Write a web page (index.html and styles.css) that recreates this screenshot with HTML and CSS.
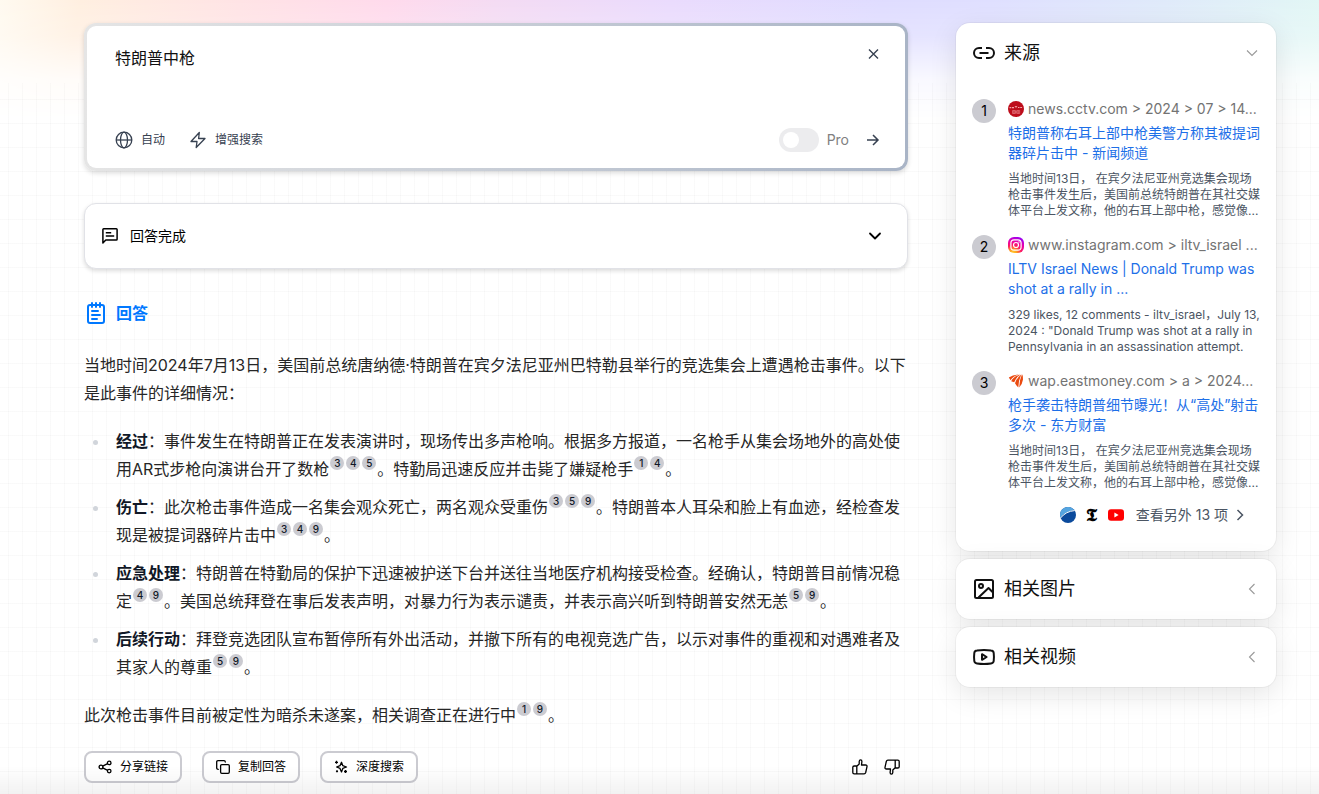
FILE: index.html
```html
<!DOCTYPE html>
<html lang="zh-CN">
<head>
<meta charset="utf-8">
<meta name="viewport" content="width=device-width, initial-scale=1">
<title>特朗普中枪</title>
<link rel="stylesheet" href="styles.css">
</head>
<body>
<div class="glow"></div>
<div class="page">
  <main class="main">
    <form class="search">
      <div class="search-inner">
        <div class="search-top">
          <textarea class="query" aria-label="搜索内容" rows="2">特朗普中枪</textarea>
          <button class="icon-btn" type="button" aria-label="清空">
            <svg width="16" height="16" viewBox="0 0 16 16" fill="none" stroke="currentColor" stroke-width="1.4"><path d="M4 3.500l9 9M13 3.500l-9 9"/></svg>
          </button>
        </div>
        <div class="search-bar">
          <button class="mode" type="button">
            <svg width="18" height="18" viewBox="0 0 18 18" fill="none" stroke="currentColor" stroke-width="1.3"><circle cx="9" cy="9" r="7.800"/><ellipse cx="9" cy="9" rx="3.500" ry="7.800"/><path d="M1.200 9h15.600"/></svg>
            <span>自动</span>
          </button>
          <button class="mode" type="button">
            <svg width="18" height="18" viewBox="0 0 18 18" fill="none" stroke="currentColor" stroke-width="1.300" stroke-linejoin="round"><path d="M10.300 1.500L2 10.500h6l-.8 6L16 7.500H9.600z"/></svg>
            <span>增强搜索</span>
          </button>
          <label class="pro"><input class="switch" type="checkbox"><span>Pro</span></label>
          <button class="icon-btn" type="submit" aria-label="搜索">
            <svg width="16" height="16" viewBox="0 0 16 16" fill="none" stroke="currentColor" stroke-width="1.500"><path d="M2 8h11M8 3l5 5-5 5"/></svg>
          </button>
        </div>
      </div>
    </form>

    <button class="status" type="button">
      <svg width="16" height="16" viewBox="0 0 16 16" fill="none" stroke="currentColor" stroke-width="1.500" stroke-linejoin="round"><path d="M.9 15V1.600q0-.8.8-.8h12.600q.8 0 .8.8v9.600q0 .8-.8.8H3.800z"/><path d="M3.800 4.800h5.400M3.800 8h8.400"/></svg>
      <span class="status-text">回答完成</span>
      <svg width="16" height="16" viewBox="0 0 16 16" fill="none" stroke="currentColor" stroke-width="1.800" stroke-linecap="round" stroke-linejoin="round"><path d="M3 5.500l5 5 5-5"/></svg>
    </button>

    <h2 class="answer-title">
      <svg width="24" height="24" viewBox="0 0 24 24" fill="none" stroke="currentColor" stroke-width="2" stroke-linecap="round"><rect x="4" y="4" width="16" height="18" rx="2"/><path d="M8 2v4M12 2v4M16 2v4M8 10h6M8 14h8M8 18h5"/></svg>
      <span>回答</span>
    </h2>

    <article class="answer">
      <p>当地时间2024年7月13日，美国前总统唐纳德·特朗普在宾夕法尼亚州巴特勒县举行的竞选集会上遭遇枪击事件。以下是此事件的详细情况：</p>
      <ul>
        <li><strong>经过</strong>：事件发生在特朗普正在发表演讲时，现场传出多声枪响。根据多方报道，一名枪手从集会场地外的高处使用AR式步枪向演讲台开了数枪<a class="cite" href="#s3">3</a><a class="cite" href="#s4">4</a><a class="cite" href="#s5">5</a>。特勤局迅速反应并击毙了嫌疑枪手<a class="cite" href="#s1">1</a><a class="cite" href="#s4">4</a>。</li>
        <li><strong>伤亡</strong>：此次枪击事件造成一名集会观众死亡，两名观众受重伤<a class="cite" href="#s3">3</a><a class="cite" href="#s5">5</a><a class="cite" href="#s9">9</a>。特朗普本人耳朵和脸上有血迹，经检查发现是被提词器碎片击中<a class="cite" href="#s3">3</a><a class="cite" href="#s4">4</a><a class="cite" href="#s9">9</a>。</li>
        <li><strong>应急处理</strong>：特朗普在特勤局的保护下迅速被护送下台并送往当地医疗机构接受检查。经确认，特朗普目前情况稳定<a class="cite" href="#s4">4</a><a class="cite" href="#s9">9</a>。美国总统拜登在事后发表声明，对暴力行为表示谴责，并表示高兴听到特朗普安然无恙<a class="cite" href="#s5">5</a><a class="cite" href="#s9">9</a>。</li>
        <li><strong>后续行动</strong>：拜登竞选团队宣布暂停所有外出活动，并撤下所有的电视竞选广告，以示对事件的重视和对遇难者及其家人的尊重<a class="cite" href="#s5">5</a><a class="cite" href="#s9">9</a>。</li>
      </ul>
      <p>此次枪击事件目前被定性为暗杀未遂案，相关调查正在进行中<a class="cite" href="#s1">1</a><a class="cite" href="#s9">9</a>。</p>
    </article>

    <div class="actions">
      <button class="action" type="button">
        <svg width="14" height="14" viewBox="0 0 14 14" fill="none" stroke="currentColor" stroke-width="1.300"><circle cx="3" cy="7" r="1.900"/><circle cx="11.200" cy="2.900" r="1.800"/><circle cx="11.200" cy="11.100" r="1.800"/><path d="M4.700 6.100l4.900-2.400M4.700 7.900l4.900 2.400"/></svg>
        <span>分享链接</span>
      </button>
      <button class="action" type="button">
        <svg width="14" height="14" viewBox="0 0 14 14" fill="none" stroke="currentColor" stroke-width="1.300" stroke-linecap="round"><rect x="4.600" y="4.600" width="8.700" height="8.700" rx="1.200"/><path d="M2.300 9.300q-1.600 0-1.600-1.300V2q0-1.300 1.300-1.300h6q1.300 0 1.300 1.300"/></svg>
        <span>复制回答</span>
      </button>
      <button class="action" type="button">
        <svg width="14" height="14" viewBox="0 0 14 14" fill="none" stroke="currentColor" stroke-width="1.300" stroke-linejoin="round"><path d="M7.500 2.300l1.300 3.400 3.700 1.300-3.700 1.400-1.300 3.500L6 8.400 2.600 7 6 5.700z"/><path d="M2.500.8v3M1 2.300h3M11.500 10v3M10 11.500h3"/><circle cx="3" cy="11.300" r=".5"/></svg>
        <span>深度搜索</span>
      </button>
      <div class="votes">
        <button class="icon-btn vote" type="button" aria-label="有帮助">
          <svg width="16" height="16" viewBox="0 0 16 16" fill="none" stroke="currentColor" stroke-width="1.300" stroke-linejoin="round"><path d="M4.800 14.800V7.200L7.200 5V2.500Q7.300.9 8.600.9q1.300 0 1.300 1.600L9.500 6h4q1.700 0 1.500 1.600l-1.300 5.900q-.4 1.300-1.600 1.300H2.200q-1.400 0-1.400-1.400V8.300q0-1.300 1.400-1.300h2.600"/></svg>
        </button>
        <button class="icon-btn vote" type="button" aria-label="没有帮助">
          <svg width="16" height="16" viewBox="0 0 16 16" fill="none" stroke="currentColor" stroke-width="1.300" stroke-linejoin="round"><path d="M11.200 1.200v7.600L8.800 11v2.500q-.1 1.600-1.400 1.600-1.300 0-1.300-1.600L6.500 10h-4Q.8 10 1 8.400l1.300-5.900q.4-1.300 1.600-1.300h9.900q1.400 0 1.400 1.400v5.100q0 1.300-1.400 1.300h-2.600"/></svg>
        </button>
      </div>
    </div>
  </main>

  <aside class="side">
    <section class="card sources">
      <button class="card-head" type="button">
        <svg width="24" height="24" viewBox="0 0 24 24" fill="none" stroke="currentColor" stroke-width="2"><path d="M10 17H7A5 5 0 0 1 7 7h3M14 7h3a5 5 0 0 1 0 10h-3M7.500 12h9"/></svg>
        <span class="card-title">来源</span>
        <svg class="caret" width="12" height="12" viewBox="0 0 12 12" fill="none" stroke="currentColor" stroke-width="1.100"><path d="M1 3.500l5 5 5-5"/></svg>
      </button>
      <ol class="list">
        <li class="source" id="s1">
          <span class="num">1</span>
          <div class="source-body">
            <div class="url">
              <svg width="16" height="16" viewBox="0 0 16 16"><circle cx="8" cy="8" r="8" fill="#bd0d1b"/><path d="M1.500 6.700h1.800M4 6.700h2M7 6.200q1-1.200 2 0M10 6.500h1.500M12.200 6.500h1.900" stroke="#f3a5a8" stroke-width="1.200" fill="none"/><path d="M4.500 9.500h3v3h-3zM8.700 9.500h3v3h-3zM6 9v4M10.200 9.500v3M4.500 11h7" stroke="#e77f86" stroke-width=".6" fill="none"/></svg>
              <span>news.cctv.com &gt; 2024 &gt; 07 &gt; 14...</span>
            </div>
            <a class="source-title" href="#s1">特朗普称右耳上部中枪美警方称其被提词器碎片击中 - 新闻频道</a>
            <p class="desc">当地时间13日， 在宾夕法尼亚州竞选集会现场枪击事件发生后，美国前总统特朗普在其社交媒体平台上发文称，他的右耳上部中枪，感觉像...</p>
          </div>
        </li>
        <li class="source" id="s2">
          <span class="num">2</span>
          <div class="source-body">
            <div class="url">
              <svg width="16" height="16" viewBox="0 0 16 16"><defs><radialGradient id="ig" cx=".3" cy="1.050" r="1.100"><stop offset="0" stop-color="#ffdd30"/><stop offset=".25" stop-color="#ff9b22"/><stop offset=".5" stop-color="#fc1765"/><stop offset=".75" stop-color="#e600b0"/><stop offset="1" stop-color="#9500f5"/></radialGradient></defs><rect width="16" height="16" rx="6" fill="url(#ig)"/><rect x="2.900" y="2.900" width="10.200" height="10.200" rx="3.200" fill="none" stroke="#fff" stroke-width="1.200"/><circle cx="8" cy="8" r="2.500" fill="none" stroke="#fff" stroke-width="1.200"/><circle cx="11" cy="5" r=".7" fill="#fff"/></svg>
              <span>www.instagram.com &gt; iltv_israel ...</span>
            </div>
            <a class="source-title" href="#s2">ILTV Israel News | Donald Trump was shot at a rally in ...</a>
            <p class="desc">329 likes, 12 comments - iltv_israel，July 13, 2024 : "Donald Trump was shot at a rally in Pennsylvania in an assassination attempt.</p>
          </div>
        </li>
        <li class="source" id="s3">
          <span class="num">3</span>
          <div class="source-body">
            <div class="url">
              <svg width="16" height="16" viewBox="0 0 16 16" fill="#ea4a10"><path d="M.8 4.500Q5 1.500 11.500 1.300 5 3 2.600 7.300z"/><path d="M3.200 8.300Q5.500 3.300 12.500 1.500 8 4.500 6.200 9.300z"/><path d="M7 10.300Q8.500 5 13.300 1.500 10.600 7 10.300 14.500L8.500 12.500z"/><path d="M11.200 14.500Q11.300 7 14 1.300q1.500 1.800 1 5.200-.6 4.700-3.800 8z"/></svg>
              <span>wap.eastmoney.com &gt; a &gt; 2024...</span>
            </div>
            <a class="source-title" href="#s3">枪手袭击特朗普细节曝光！从“高处”射击多次 - 东方财富</a>
            <p class="desc">当地时间13日， 在宾夕法尼亚州竞选集会现场枪击事件发生后，美国前总统特朗普在其社交媒体平台上发文称，他的右耳上部中枪，感觉像...</p>
          </div>
        </li>
      </ol>
      <a class="more" href="#more">
        <svg width="16" height="16" viewBox="0 0 16 16"><circle cx="8" cy="8" r="8" fill="#0b4a9c"/><path d="M0 8A8 8 0 0 1 14.200 3Q6 4.200.5 10.500 0 9.500 0 8z" fill="#55a5e0"/><path d="M.5 11Q6 4.200 14.600 3.600" stroke="#fff" stroke-width="1" fill="none"/></svg>
        <span class="nyt">𝕿</span>
        <svg width="16" height="16" viewBox="0 0 16 16"><rect y="2.300" width="16" height="11.400" rx="3" fill="#f00"/><path d="M6.400 5.600v4.800L10.600 8z" fill="#fff"/></svg>
        <span class="more-text">查看另外 13 项</span>
        <svg width="8" height="12" viewBox="0 0 8 12" fill="none" stroke="currentColor" stroke-width="1.500"><path d="M1.500 1l5 5-5 5"/></svg>
      </a>
    </section>

    <section class="card">
      <button class="card-head" type="button">
        <svg width="24" height="24" viewBox="0 0 24 24" fill="none" stroke="currentColor" stroke-width="2" stroke-linejoin="round"><rect x="3" y="3" width="18" height="18" rx="1.500"/><circle cx="9" cy="9" r="2"/><path d="M6.500 20.500l10-9.500 4.500 4.500"/></svg>
        <span class="card-title">相关图片</span>
        <svg class="caret" width="12" height="12" viewBox="0 0 12 12" fill="none" stroke="currentColor" stroke-width="1.100"><path d="M8.500 1l-5 5 5 5"/></svg>
      </button>
    </section>

    <section class="card">
      <button class="card-head" type="button">
        <svg width="24" height="24" viewBox="0 0 24 24" fill="none" stroke="currentColor" stroke-width="2" stroke-linejoin="round"><path d="M5 5.500Q12 4.500 19 5.500q2.500.3 2.700 2.500.5 4 0 8-.2 2.200-2.700 2.500-7 1-14 0-2.500-.3-2.700-2.500-.5-4 0-8Q2.500 5.800 5 5.500z"/><path d="M10 9.200v5.600l4.600-2.800z"/></svg>
        <span class="card-title">相关视频</span>
        <svg class="caret" width="12" height="12" viewBox="0 0 12 12" fill="none" stroke="currentColor" stroke-width="1.100"><path d="M8.500 1l-5 5 5 5"/></svg>
      </button>
    </section>
  </aside>
</div>
<div class="bottom-fade"></div>
</body>
</html>
```
FILE: styles.css
```css
*, *::before, *::after { box-sizing: border-box; }

body {
  margin: 0;
  min-height: 100vh;
  background: #fff;
  color: #000;
  font-family: Inter, "Noto Sans CJK SC", sans-serif;
  font-size: 16px;
  line-height: 24px;
}

body::before {
  content: "";
  position: absolute;
  inset: 83px 0 0;
  z-index: -1;
  background-image:
    linear-gradient(to right, #8080800b 1px, transparent 1px),
    linear-gradient(to bottom, #8080800b 1px, transparent 1px);
  background-size: 14px 24px;
  background-position: 8px 16px;
}

.glow {
  position: absolute;
  inset: 0 0 auto;
  z-index: -1;
  height: 120px;
  background: linear-gradient(100deg, #fffaf0 0%, #ffefe0 6%, #ffe3e5 18%, #ffdaec 29%, #f4dbf3 37%, #eadbfd 50%, #dfdcff 66%, #dfdfff 74%, #dfeafa 87%, #e2f8f4 100%);
  mask-image: linear-gradient(to bottom, #000 0%, rgba(0, 0, 0, .8) 30%, rgba(0, 0, 0, .2) 66%, transparent 100%);
}

.bottom-fade {
  position: fixed;
  inset: auto 0 0;
  height: 28px;
  background: linear-gradient(to bottom, rgba(0, 0, 0, 0), rgba(0, 0, 0, .05));
  pointer-events: none;
}

button {
  margin: 0;
  padding: 0;
  border: 0;
  background: none;
  color: inherit;
  font: inherit;
  text-align: left;
  cursor: pointer;
}

a { color: inherit; text-decoration: none; }
svg { display: block; flex: none; }

.page {
  display: flex;
  align-items: flex-start;
  gap: 48px;
  padding: 23px 43px 11px 84px;
}

.main { flex: 1; min-width: 0; }

/* Search box */
.search {
  padding: 3px;
  border-radius: 12px;
  background: linear-gradient(to right, #e5e5e5, #cbd0d8 45%, #a9b4c6);
  box-shadow: 0 2px 5px rgba(0, 0, 0, .15);
}

.search-inner {
  display: flex;
  flex-direction: column;
  gap: 10px;
  padding: 20px 24px 16px 28px;
  border-radius: 9px;
  background: #fff;
}

.search-top { display: flex; align-items: flex-start; }

.query {
  display: block;
  flex: 1;
  height: 72px;
  padding: 0;
  border: 0;
  outline: 0;
  resize: none;
  background: none;
  color: #111;
  font: inherit;
}

.icon-btn { color: #374151; }

.search-bar { display: flex; align-items: center; gap: 24px; height: 24px; }

.mode {
  display: flex;
  align-items: center;
  gap: 8px;
  color: #374151;
  font-size: 12px;
}

.pro {
  display: flex;
  align-items: center;
  gap: 8px;
  margin-left: auto;
  margin-right: -8px;
  color: #808080;
  font-size: 14px;
}

.switch {
  appearance: none;
  display: flex;
  align-items: center;
  width: 40px;
  height: 24px;
  margin: 0;
  padding: 4px;
  border-radius: 12px;
  background: #ececee;
}

.switch::before {
  content: "";
  width: 16px;
  height: 16px;
  border-radius: 50%;
  background: #fff;
}

/* Answer */
.status {
  display: flex;
  align-items: center;
  gap: 12px;
  width: 100%;
  height: 66px;
  margin-top: 32px;
  padding: 0 24px 0 17px;
  border: 1px solid #e1e2e7;
  border-radius: 12px;
  background: #fff;
  box-shadow: 0 2px 4px rgba(0, 0, 0, .14);
  font-size: 14px;
}

.status-text { flex: 1; }

.answer-title {
  display: flex;
  align-items: center;
  gap: 8px;
  margin: 32px 0 26px;
  color: #0078ff;
  font-size: 16px;
  font-weight: 600;
}

.answer { color: #262626; line-height: 28px; }
.answer p { margin: 0; }

.answer ul {
  display: grid;
  gap: 10px;
  margin: 20px 0;
  padding: 0;
  list-style: none;
}

.answer li { position: relative; padding-left: 32px; }

.answer li::before {
  content: "";
  position: absolute;
  left: 9px;
  top: 13px;
  width: 5px;
  height: 5px;
  border-radius: 50%;
  background: #d1d5db;
}

.answer strong { color: #111827; font-weight: 600; }

.cite {
  display: inline-block;
  width: 14px;
  height: 14px;
  margin: 0 1px;
  border-radius: 50%;
  background: #cbcbd1;
  color: #111827;
  font-size: 10px;
  font-weight: 500;
  line-height: 14px;
  text-align: center;
  vertical-align: 8px;
}

.actions { display: flex; align-items: center; gap: 20px; margin-top: 22px; }

.action {
  display: flex;
  align-items: center;
  gap: 8px;
  height: 32px;
  padding: 0 12px;
  border: 2px solid #cbcbd1;
  border-radius: 8px;
  background: #fff;
  font-size: 12px;
}

.votes { display: flex; gap: 16px; margin-left: auto; padding-right: 8px; }
.vote { color: #000; }

/* Sidebar */
.side { display: grid; gap: 8px; width: 320px; flex: none; }

.card {
  border-radius: 14px;
  background: #fff;
  box-shadow: 0 0 0 1px rgba(0, 0, 0, .04), 0 8px 28px rgba(0, 0, 0, .1);
}

.sources { padding-bottom: 26px; }

.card-head {
  display: flex;
  align-items: center;
  gap: 8px;
  width: 100%;
  height: 60px;
  padding: 0 18px 0 16px;
  color: #111;
  font-size: 18px;
}

.card-title { flex: 1; }
.caret { color: #999; }

.list {
  display: grid;
  gap: 16px;
  margin: 0;
  padding: 16px 16px 0;
  list-style: none;
}

.source { display: flex; gap: 12px; }

.num {
  flex: none;
  width: 24px;
  height: 24px;
  border-radius: 50%;
  background: #cbcbd1;
  font-size: 14px;
  text-align: center;
}

.source-body { flex: 1; min-width: 0; font-size: 14px; line-height: 20px; }

.url {
  display: flex;
  align-items: center;
  gap: 4px;
  margin-bottom: 4px;
  color: #737373;
  white-space: nowrap;
}

.source-title { display: block; color: #1d6fe8; }

.desc {
  margin: 8px 0 0;
  color: #4b5563;
  font-size: 12px;
  line-height: 16px;
}

.more {
  display: flex;
  align-items: center;
  justify-content: flex-end;
  gap: 8px;
  margin-top: 14px;
  padding-right: 32px;
  color: #4b5563;
  font-size: 14px;
  line-height: 20px;
}

.nyt {
  width: 16px;
  color: #000;
  font-family: "DejaVu Sans", "DejaVu Serif", serif;
  font-size: 18px;
  font-weight: 700;
  text-align: center;
}

.more-text { margin-left: 4px; }
```
